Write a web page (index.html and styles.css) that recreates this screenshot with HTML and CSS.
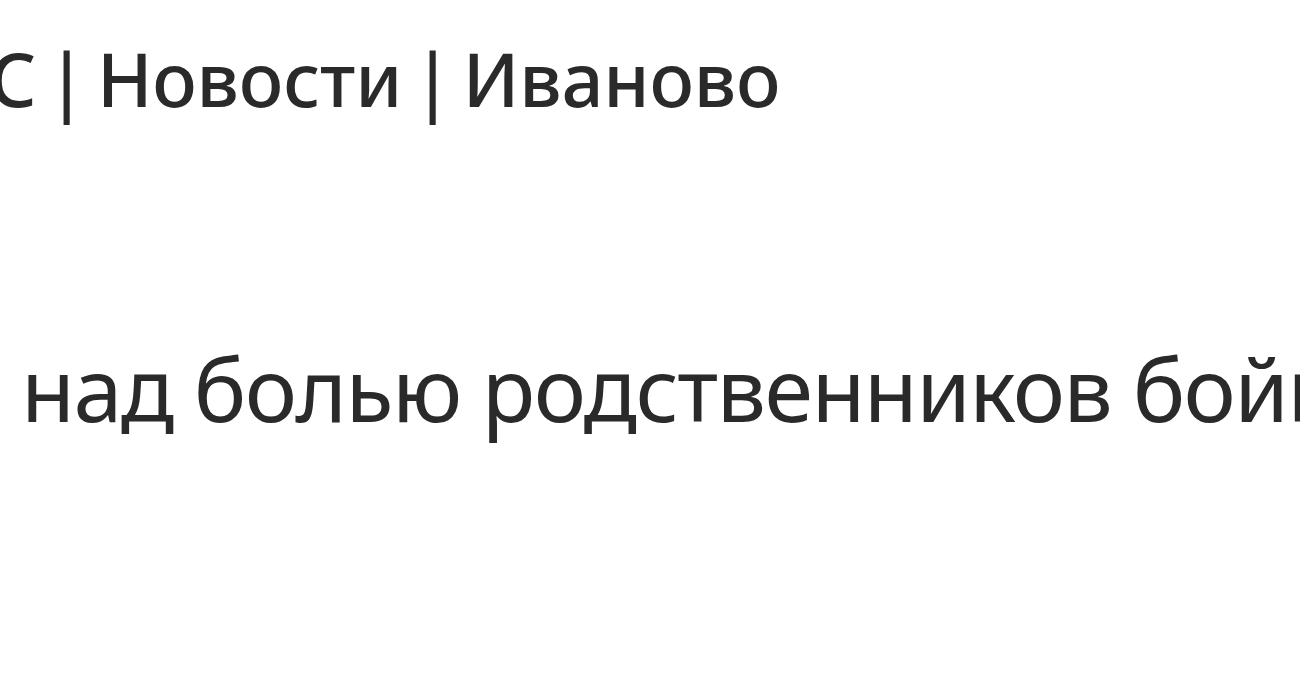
FILE: index.html
```html
<!DOCTYPE html>
<html lang="ru">
<head>
    <meta charset="UTF-8">
    <meta name="viewport" content="width=device-width, initial-scale=1.0">
    <title>Новости | Иваново</title>
    <link rel="stylesheet" href="styles.css">
</head>
<body>
    <div class="page">
        <div class="source">С | Новости | Иваново</div>
        <h1 class="headline">над болью родственников бойц</h1>
    </div>
</body>
</html>
```
FILE: styles.css
```css
html, body {
    margin: 0;
    padding: 0;
    background: #fff;
}

.page {
    width: 1300px;
    height: 696px;
    overflow: hidden;
    white-space: nowrap;
    color: #2a2a2a;
    font-family: "Noto Sans", "Open Sans", sans-serif;
    filter: blur(0.5px);
}

/* строка источника вверху */
.source {
    font-size: 74px;
    font-weight: 500;
    letter-spacing: -0.2px;
    word-spacing: -9px;
    line-height: 1;
    padding-top: 42px;
    margin-left: -11px;
}

/* заголовок, обрезанный краями кадра */
.headline {
    font-size: 88px;
    font-weight: 400;
    letter-spacing: -1.6px;
    line-height: 1;
    margin: 228px 0 0 21px;
}
```
